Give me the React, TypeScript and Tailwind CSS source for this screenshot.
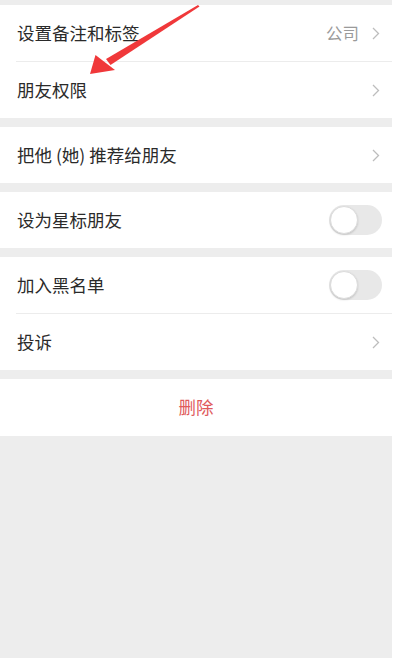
import React from 'react';

const font = { fontFamily: '"Noto Sans CJK SC", "Noto Sans", sans-serif' };

function Chevron() {
  return (
    <svg width="8" height="13" viewBox="0 0 8 13" className="shrink-0">
      <polyline points="1,1 6.5,6.5 1,12" fill="none" stroke="#bdbdbd" strokeWidth="1.3" />
    </svg>
  );
}

function Toggle() {
  return (
    <div className="w-[53px] h-[30px] rounded-full bg-[#e8e8e8] p-[1px] flex items-center">
      <div className="w-[28px] h-[28px] rounded-full bg-white border border-[#dcdcdc] shadow-[0_1px_2px_rgba(0,0,0,0.15)]" />
    </div>
  );
}

function Row({ label, value, toggle }: { label: string; value?: string; toggle?: boolean }) {
  return (
    <div className="h-[56px] flex items-center justify-between pl-[17px] pr-[12px]">
      <span className="text-[17.5px] text-[#2a2a2a]">{label}</span>
      {toggle ? (
        <div className="-mr-[2px]">
          <Toggle />
        </div>
      ) : (
        <div className="flex items-center gap-[13px]">
          {value && <span className="text-[16.5px] text-[#9a9a9a]">{value}</span>}
          <Chevron />
        </div>
      )}
    </div>
  );
}

function Divider() {
  return <div className="ml-[16px] h-px bg-[#ececec]" />;
}

export default function App() {
  return (
    <div className="relative w-[400px] h-[658px] bg-white flex overflow-hidden" style={font}>
      <div className="w-[392px] h-full bg-[#ededed] pt-[5px] flex flex-col gap-[9px]">
        <div className="bg-white">
          <Row label="设置备注和标签" value="公司" />
          <Divider />
          <Row label="朋友权限" />
        </div>
        <div className="bg-white">
          <Row label="把他 (她) 推荐给朋友" />
        </div>
        <div className="bg-white">
          <Row label="设为星标朋友" toggle />
        </div>
        <div className="bg-white">
          <Row label="加入黑名单" toggle />
          <Divider />
          <Row label="投诉" />
        </div>
        <div className="bg-white h-[57px] flex items-center justify-center">
          <span className="text-[17.5px] text-[#e05a5c]">删除</span>
        </div>
      </div>

      <svg className="absolute left-0 top-0 pointer-events-none" width="400" height="120" viewBox="0 0 400 120">
        <polygon points="198,5 199.5,6.5 110.5,65 106,59" fill="#f0383a" />
        <polygon points="90,74 95.5,55 115,70" fill="#f0383a" />
      </svg>
    </div>
  );
}
